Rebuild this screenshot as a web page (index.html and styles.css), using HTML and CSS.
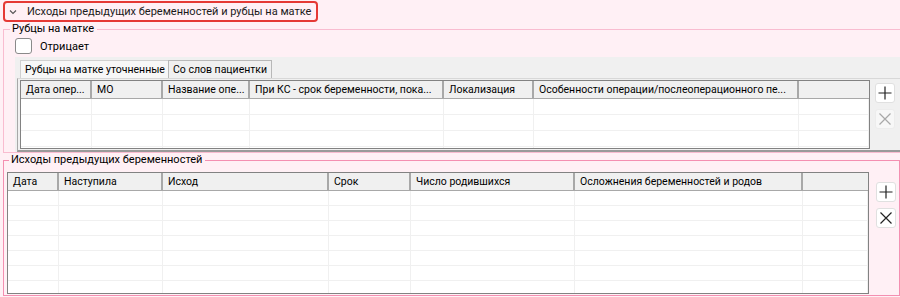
FILE: index.html
```html
<!DOCTYPE html>
<html lang="ru">

<head>
    <meta charset="UTF-8">
    <title>Исходы предыдущих беременностей</title>
    <link rel="stylesheet" href="styles.css">
</head>

<body>

    <div class="section-head">
        <svg class="chevron" width="10" height="10" viewBox="0 0 10 10">
            <path d="M2 3.5 L5 6.5 L8 3.5" fill="none" stroke="#555" stroke-width="1.1" />
        </svg>
        <span class="section-title">Исходы предыдущих беременностей и рубцы на матке</span>
    </div>

    <fieldset class="group group-scars">
        <legend>Рубцы на матке</legend>

        <label class="check">
            <span class="check-box"></span>
            <span>Отрицает</span>
        </label>

        <div class="tabs">
            <div class="tab-bar">
                <div class="tab active">Рубцы на матке уточненные</div>
                <div class="tab">Со слов пациентки</div>
            </div>
            <div class="tab-pane">
                <div class="grid grid-scars">
                    <table>
                        <colgroup>
                            <col style="width:70px">
                            <col style="width:71px">
                            <col style="width:87px">
                            <col style="width:194px">
                            <col style="width:90px">
                            <col style="width:265px">
                            <col>
                        </colgroup>
                        <thead>
                            <tr>
                                <th>Дата опер...</th>
                                <th>МО</th>
                                <th>Название опе...</th>
                                <th>При КС - срок беременности, пока...</th>
                                <th>Локализация</th>
                                <th>Особенности операции/послеоперационного пе...</th>
                                <th></th>
                            </tr>
                        </thead>
                        <tbody id="scarRows"></tbody>
                    </table>
                </div>
                <div class="side-buttons">
                    <button class="icon-btn" title="Добавить">
                        <svg width="14" height="14" viewBox="0 0 14 14"><path d="M7 0.5 V13.5 M0.5 7 H13.5" stroke="#222" stroke-width="1.2" /></svg>
                    </button>
                    <button class="icon-btn" disabled title="Удалить">
                        <svg width="14" height="14" viewBox="0 0 14 14"><path d="M1.5 1.5 L12.5 12.5 M12.5 1.5 L1.5 12.5" stroke="#a8a8a8" stroke-width="1.2" /></svg>
                    </button>
                </div>
            </div>
        </div>
    </fieldset>

    <fieldset class="group group-outcomes">
        <legend>Исходы предыдущих беременностей</legend>

        <div class="grid-line">
            <div class="grid grid-outcomes">
                <table>
                    <colgroup>
                        <col style="width:50px">
                        <col style="width:104px">
                        <col style="width:166px">
                        <col style="width:82px">
                        <col style="width:164px">
                        <col style="width:228px">
                        <col>
                    </colgroup>
                    <thead>
                        <tr>
                            <th>Дата</th>
                            <th>Наступила</th>
                            <th>Исход</th>
                            <th>Срок</th>
                            <th>Число родившихся</th>
                            <th>Осложнения беременностей и родов</th>
                            <th></th>
                        </tr>
                    </thead>
                    <tbody id="outcomeRows"></tbody>
                </table>
            </div>
            <div class="side-buttons">
                <button class="icon-btn" title="Добавить">
                    <svg width="14" height="14" viewBox="0 0 14 14"><path d="M7 0.5 V13.5 M0.5 7 H13.5" stroke="#222" stroke-width="1.2" /></svg>
                </button>
                <button class="icon-btn" title="Удалить">
                    <svg width="14" height="14" viewBox="0 0 14 14"><path d="M1.5 1.5 L12.5 12.5 M12.5 1.5 L1.5 12.5" stroke="#222" stroke-width="1.2" /></svg>
                </button>
            </div>
        </div>
    </fieldset>

    <script>
        function fillEmpty(id, count) {
            const body = document.getElementById(id);
            for (let i = 0; i < count; i++) {
                const tr = document.createElement("tr");
                tr.innerHTML = "<td></td>".repeat(7);
                body.appendChild(tr);
            }
        }

        fillEmpty("scarRows", 4);
        fillEmpty("outcomeRows", 8);
    </script>

</body>

</html>
```

FILE: styles.css
```css
* {
    margin: 0;
    padding: 0;
    box-sizing: border-box;
    font-family: 'Roboto', 'Noto Sans', sans-serif;
}

body {
    width: 900px;
    height: 297px;
    overflow: hidden;
    background: #fff0f5;
    color: #000;
    font-size: 11px;
}

.section-head {
    display: flex;
    align-items: center;
    width: 315px;
    height: 21px;
    margin: 1px 0 0 3px;
    padding-left: 3px;
    border: 2px solid #e53935;
    border-radius: 4px;
    white-space: nowrap;
}

.chevron {
    flex-shrink: 0;
    margin-right: 9px;
}

.section-title {
    font-size: 11px;
    color: #1a1a1a;
}

.group {
    border: 1px solid #f48fb1;
    margin-left: 3px;
    min-inline-size: 0;
}

.group legend {
    padding: 0 3px 0 2px;
    line-height: 14px;
    font-size: 11px;
    white-space: nowrap;
}

.group-scars {
    border-color: #f9bcd0;
    border-right: none;
    padding: 0 0 0 11px;
}

.group-scars legend {
    margin-left: -5px;
}

.check {
    display: flex;
    align-items: center;
    gap: 8px;
    margin-top: 2px;
    height: 16px;
    font-size: 11px;
}

.check-box {
    width: 17px;
    height: 16px;
    background: #fff;
    border: 1px solid #8a8a8a;
    border-radius: 3px;
}

.tabs {
    margin-top: 3px;
    background: #f0f0f0;
}

.tab-bar {
    display: flex;
    height: 21px;
    padding: 3px 0 0 5px;
}

.tab {
    padding: 0 4px;
    line-height: 17px;
    border: 1px solid #b8b8b8;
    border-bottom: none;
    background: #f0f0f0;
    font-size: 10.5px;
    white-space: nowrap;
}

.tab.active {
    width: 148px;
    background: #f7f7f7;
    border-color: #d0d0d0;
    border-right: none;
}

.tab-pane {
    display: flex;
    margin-left: 2px;
    padding: 1px 0 1px 2px;
    border-top: 1px solid #d8d8d8;
    border-left: 1px solid #a8a8a8;
    border-bottom: 2px solid #9a9a9a;
}

.grid {
    background: #fff;
    border: 1px solid #828282;
    overflow: hidden;
}

.grid table {
    border-collapse: collapse;
    table-layout: fixed;
    width: 100%;
}

.grid th {
    height: 17px;
    padding: 0 5px;
    text-align: left;
    font-weight: normal;
    font-size: 10.5px;
    background: #f0f0f0;
    border-right: 2px solid #a8a8a8;
    border-bottom: 1px solid #a8a8a8;
    white-space: nowrap;
    overflow: hidden;
}

.grid th:last-child {
    border-right: none;
}

.grid td {
    border-right: 1px solid #f0f0f0;
    border-bottom: 1px solid #f0f0f0;
}

.grid-scars {
    width: 850px;
    height: 69px;
}

.grid-scars td {
    height: 16px;
}

.side-buttons {
    display: flex;
    flex-direction: column;
    gap: 6px;
}

.tab-pane .side-buttons {
    margin: 3px 0 0 5px;
}

.icon-btn {
    display: flex;
    align-items: center;
    justify-content: center;
    width: 20px;
    height: 20px;
    background: #fff;
    border: 1px solid #e0e0e0;
    border-radius: 3px;
}

.icon-btn:disabled {
    background: #f7f7f7;
    border-color: #ececec;
}

.group-outcomes {
    width: 897px;
    height: 143px;
    padding: 5px 3px 1px 3px;
}

.group-outcomes legend {
    margin-left: 2px;
}

.grid-line {
    display: flex;
}

.grid-outcomes {
    width: 862px;
    height: 122px;
}

.grid-outcomes td {
    height: 15px;
}

.grid-line .side-buttons {
    margin: 10px 0 0 7px;
}
```
